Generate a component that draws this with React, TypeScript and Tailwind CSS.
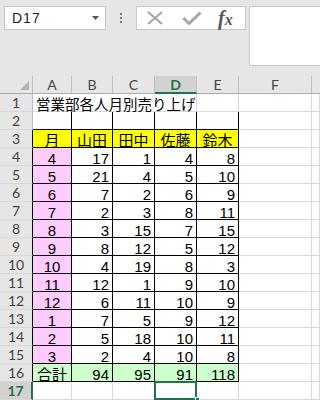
import React from "react";

const months = [4, 5, 6, 7, 8, 9, 10, 11, 12, 1, 2, 3];
const yamada = [17, 21, 7, 2, 3, 8, 4, 12, 6, 7, 5, 2];
const tanaka = [1, 4, 2, 3, 15, 12, 19, 1, 11, 5, 18, 4];
const sato = [4, 5, 6, 8, 7, 5, 8, 9, 10, 9, 10, 10];
const suzuki = [8, 10, 9, 11, 15, 12, 3, 10, 9, 12, 11, 8];

const sum = (a: number[]) => a.reduce((s, n) => s + n, 0);

const cols = ["A", "B", "C", "D", "E", "F"];

type CellProps = {
  children?: React.ReactNode;
  bg?: string;
  black?: boolean;
  align?: "left" | "center" | "right";
  span?: boolean;
};

function Cell({ children, bg = "bg-white", black, align = "right", span }: CellProps) {
  const border = black ? "border-r border-b border-black" : "border-r border-b border-[#d9d9d9]";
  const a =
    align === "center" ? "justify-center" : align === "left" ? "justify-start pl-[3px]" : "justify-end pr-[3px]";
  return (
    <div
      className={`${bg} ${border} ${a} ${span ? "col-span-4" : ""} flex h-[18px] items-end overflow-visible whitespace-nowrap text-[15px] leading-[12px] text-black`}
    >
      {children}
    </div>
  );
}

function RowHead({ n, black, active }: { n: number; black?: boolean; active?: boolean }) {
  if (active) {
    return (
      <div className="flex h-[18px] items-center justify-center border-r-2 border-b border-r-[#217346] border-b-[#d9d9d9] bg-[#d2d2d2] font-['Lato',sans-serif] text-[14px] font-bold text-[#217346]">
        {n}
      </div>
    );
  }
  return (
    <div
      className={`flex h-[18px] items-center justify-center border-r border-b border-b-[#d9d9d9] bg-[#e6e6e6] font-['Lato',sans-serif] text-[14px] text-[#444] ${
        black ? "border-r-black" : "border-r-[#bfbfbf]"
      }`}
    >
      {n}
    </div>
  );
}

function Toolbar() {
  return (
    <div className="flex h-[76px] items-start bg-[#e6e6e6] pt-[6px] pl-[4px]">
      <div className="flex h-[24px] w-[102px] items-center justify-between border border-[#c6c6c6] bg-white pl-[7px] pr-[6px]">
        <span className="font-['Liberation_Sans',sans-serif] text-[14px] tracking-[1px] text-[#222]">D17</span>
        <svg width="7" height="4" viewBox="0 0 7 4">
          <path d="M0 0h7L3.5 4z" fill="#555" />
        </svg>
      </div>
      <div className="flex h-[24px] w-[30px] flex-col items-center justify-center gap-[2px]">
        <span className="h-[2px] w-[2px] bg-[#777]" />
        <span className="h-[2px] w-[2px] bg-[#777]" />
        <span className="h-[2px] w-[2px] bg-[#777]" />
      </div>
      <div className="flex h-[24px] w-[110px] items-center border border-[#c6c6c6] bg-white pl-[9px]">
        <svg width="18" height="14" viewBox="0 0 18 14">
          <path d="M2 1l14 12M16 1L2 13" stroke="#a6a6a6" strokeWidth="2.2" fill="none" />
        </svg>
        <svg className="ml-[18px]" width="20" height="14" viewBox="0 0 20 14">
          <path d="M1.5 7l5.5 5.5L18.5 1.5" stroke="#a6a6a6" strokeWidth="3" fill="none" />
        </svg>
        <span className="ml-[16px] font-['Liberation_Serif',serif] text-[20px] leading-none font-bold text-[#555] italic">
          f<span className="text-[16px]">x</span>
        </span>
      </div>
      <div className="ml-[3px] h-[60px] flex-1 border border-r-0 border-[#c6c6c6] bg-white" />
    </div>
  );
}

function HeaderRow() {
  return (
    <>
      <div className="relative h-[18px] border-r border-b border-r-[#bfbfbf] border-b-[#ababab] bg-[#e6e6e6]">
        <svg className="absolute right-[3px] bottom-[3px]" width="9" height="9" viewBox="0 0 9 9">
          <path d="M9 0v9H0z" fill="#b4b4b4" />
        </svg>
      </div>
      {cols.map((c) =>
        c === "D" ? (
          <div
            key={c}
            className="flex h-[18px] items-center justify-center border-r border-b-2 border-r-[#bfbfbf] border-b-[#217346] bg-[#d2d2d2] font-['Lato',sans-serif] text-[14px] font-bold text-[#217346]"
          >
            {c}
          </div>
        ) : (
          <div
            key={c}
            className="flex h-[18px] items-center justify-center border-r border-b border-r-[#bfbfbf] border-b-[#ababab] bg-[#e6e6e6] font-['Lato',sans-serif] text-[14px] text-[#444]"
          >
            {c}
          </div>
        )
      )}
      <div className="h-[18px] border-b border-b-[#ababab] bg-[#e6e6e6]" />
    </>
  );
}

export default function App() {
  return (
    <div className="h-[400px] w-[320px] overflow-hidden bg-white font-['Liberation_Sans','Noto_Sans_CJK_JP',sans-serif]">
      <Toolbar />
      <div className="grid grid-cols-[33px_39px_41px_42px_42px_42px_73px_1fr]">
        <HeaderRow />

        {/* row 1 */}
        <RowHead n={1} />
        <Cell span align="left">
          <span className="text-[14.5px]">営業部各人月別売り上げ</span>
        </Cell>
        <Cell />
        <Cell />
        <Cell />

        {/* row 2 */}
        <RowHead n={2} />
        <Cell black />
        <Cell black />
        <Cell black />
        <Cell black />
        <Cell black />
        <Cell />
        <Cell />

        {/* row 3 */}
        <RowHead n={3} black />
        {["月", "山田", "田中", "佐藤", "鈴木"].map((h) => (
          <Cell key={h} bg="bg-[#ffff00]" black align="center">
            {h}
          </Cell>
        ))}
        <Cell />
        <Cell />

        {months.map((m, i) => (
          <React.Fragment key={i}>
            <RowHead n={i + 4} black />
            <Cell bg="bg-[#ffccff]" black align="center">
              {m}
            </Cell>
            <Cell black>{yamada[i]}</Cell>
            <Cell black>{tanaka[i]}</Cell>
            <Cell black>{sato[i]}</Cell>
            <Cell black>{suzuki[i]}</Cell>
            <Cell />
            <Cell />
          </React.Fragment>
        ))}

        {/* row 16 */}
        <RowHead n={16} black />
        <Cell bg="bg-[#ccffcc]" black align="center">
          合計
        </Cell>
        <Cell bg="bg-[#ccffcc]" black>
          {sum(yamada)}
        </Cell>
        <Cell bg="bg-[#ccffcc]" black>
          {sum(tanaka)}
        </Cell>
        <Cell bg="bg-[#ccffcc]" black>
          {sum(sato)}
        </Cell>
        <Cell bg="bg-[#ccffcc]" black>
          {sum(suzuki)}
        </Cell>
        <Cell />
        <Cell />

        {/* row 17 */}
        <RowHead n={17} active />
        <Cell />
        <Cell />
        <Cell />
        <div className="relative h-[18px] border-r border-b border-[#d9d9d9] bg-white">
          <div className="absolute -top-px -left-px h-[19px] w-[43px] border-2 border-[#217346]" />
          <div className="absolute -right-[4px] -bottom-[3px] h-[5px] w-[5px] border border-white bg-[#217346]" />
        </div>
        <Cell />
        <Cell />
        <Cell />
      </div>
    </div>
  );
}
